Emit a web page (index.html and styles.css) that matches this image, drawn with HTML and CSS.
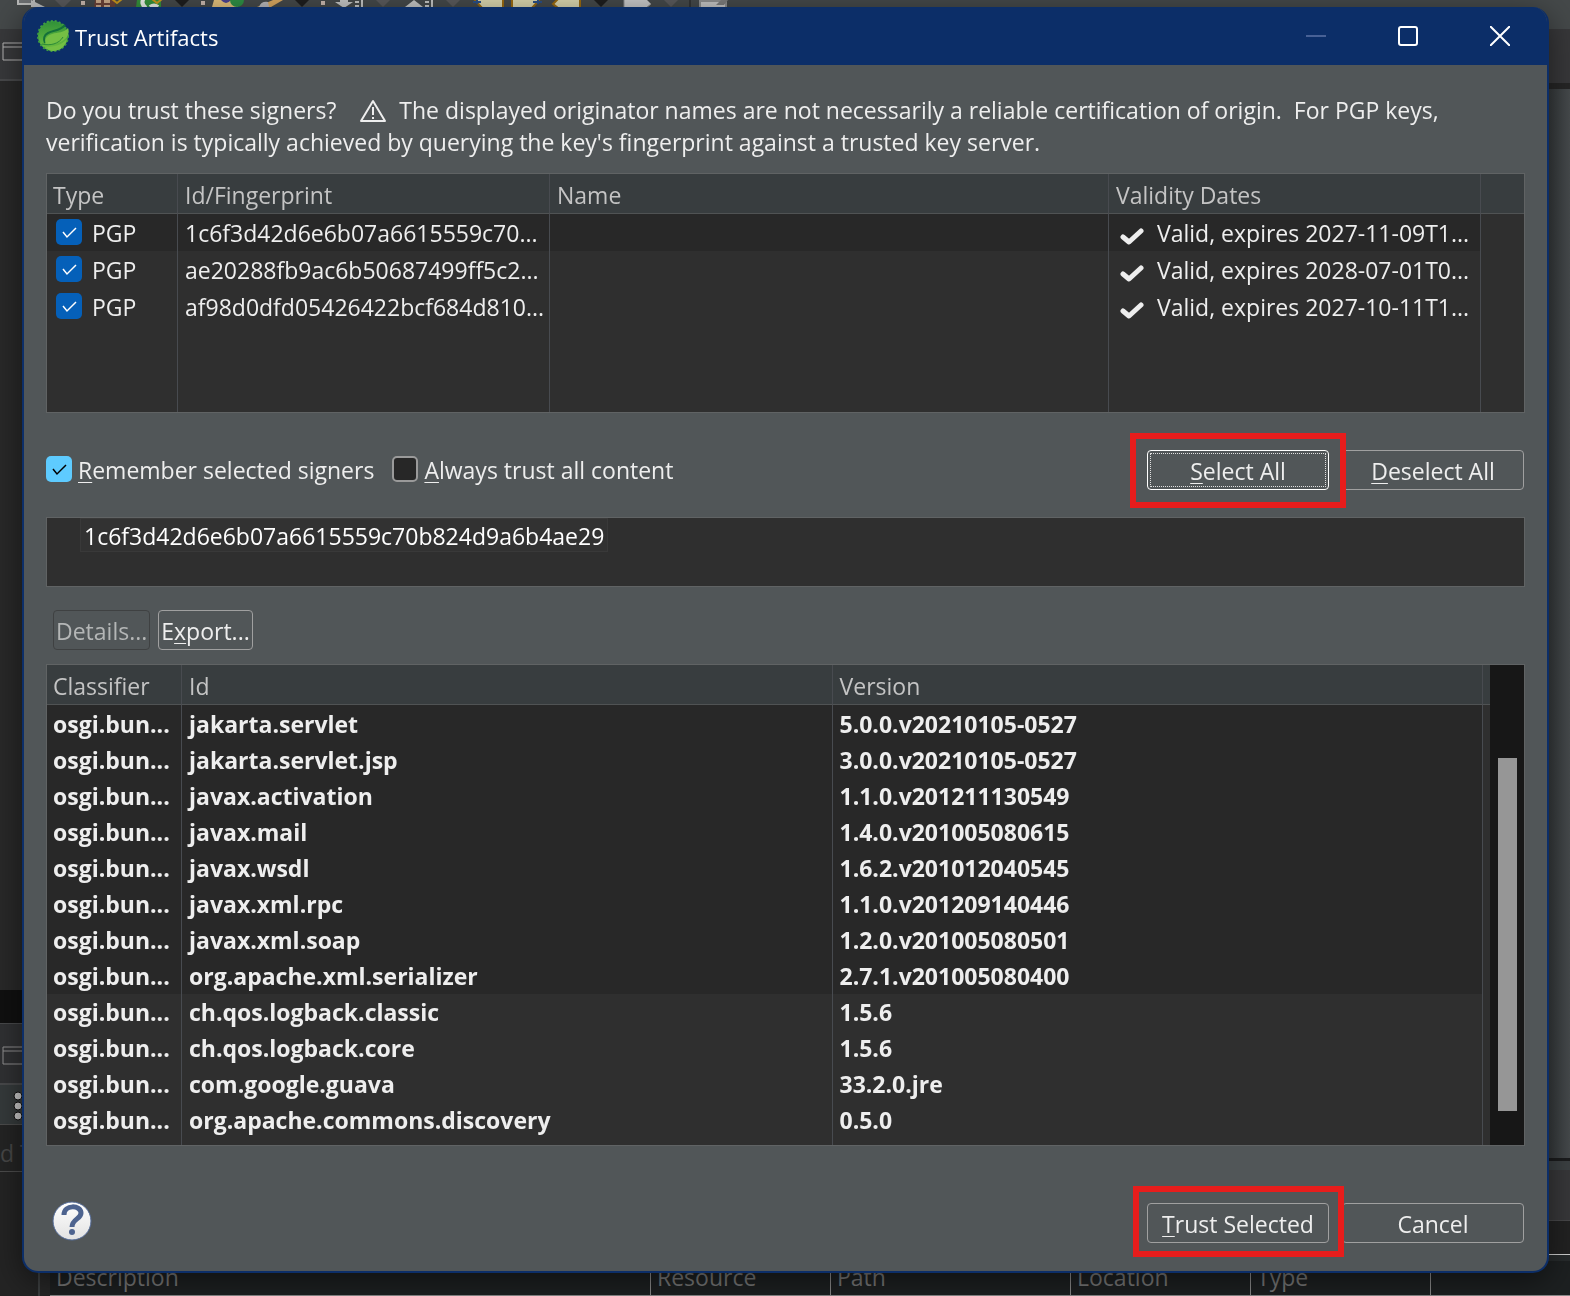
FILE: index.html
```html
<!DOCTYPE html>
<html lang="en">
<head>
    <meta charset="UTF-8">
    <meta name="viewport" content="width=device-width, initial-scale=1.0">
    <title>Trust Artifacts</title>
    <link rel="stylesheet" href="styles.css">
</head>
<body>
    <div class="ide">
        <div class="ide-toolbar">
            <svg width="760" height="10" viewBox="0 0 760 10" aria-hidden="true">
                <path d="M18 -3h16v7H18z" fill="#6d7072" stroke="#b9bab9" stroke-width="2"/>
                <path d="M31 0l14 7H31z" fill="#b9bab9"/>
                <path d="M55 0h16l-8 8z" fill="#5a5a5c"/>
                <path d="M81 1h4v4h-4z" fill="#c9b9b0"/>
                <path d="M95 0h20v7H94z" fill="#6b4238"/>
                <path d="M96 0h5v3h-5zM104 0h6v3h-6zM96 5h5v2h-5zM104 5h6v2h-6z" fill="#c9a98a"/>
                <path d="M112 -1l5 4 5-4" fill="none" stroke="#c9971c" stroke-width="2"/>
                <path d="M137 0h24v7h-25z" fill="#35923b"/>
                <path d="M144 -2q-4 6 2 10M150 7q4-3 8 0" fill="none" stroke="#e8eee6" stroke-width="4"/>
                <path d="M152 -1l5 4 5-4" fill="none" stroke="#c9971c" stroke-width="2"/>
                <path d="M175 0h14l-7 7z" fill="#1e1e1e"/>
                <path d="M201 1h4v4h-4z" fill="#c9b9b0"/>
                <path d="M214 0h24v7h-26z" fill="#e3c07c"/>
                <path d="M221 0h10q-5 6-10 0z" fill="#4b4390"/>
                <circle cx="237" cy="0" r="7" fill="#2f8f45"/>
                <path d="M257 7l16-7h10l-12 7z" fill="#d9a860"/>
                <path d="M259 7q2-6 9-5l1 5z" fill="#b8b8bc"/>
                <path d="M295 0h14l-7 7z" fill="#1e1e1e"/>
                <path d="M321 1h4v4h-4z" fill="#c9b9b0"/>
                <path d="M335 2h5V0h8v2h5l-9 6z" fill="#c4c5c4"/>
                <path d="M355 2h4M355 6h4M362 0v8" stroke="#c4c5c4" stroke-width="2"/>
                <path d="M376 0h14l-7 7z" fill="#5a5a5c"/>
                <path d="M405 7l9-7 9 7z" fill="#c4c5c4"/>
                <path d="M425 2h4M425 6h4M432 0v8" stroke="#c4c5c4" stroke-width="2"/>
                <path d="M446 0h14l-7 7z" fill="#5a5a5c"/>
                <path d="M474 -1l8 9h21V-1z" fill="#d9d5ae" stroke="#9a6a10" stroke-width="2"/>
                <path d="M473 2h8M477 0v4" stroke="#2a4f86" stroke-width="2"/>
                <path d="M512 -1v9h20l8-9z" fill="#d9d5ae" stroke="#9a6a10" stroke-width="2"/>
                <path d="M533 2h9M538 0v4" stroke="#2a4f86" stroke-width="2"/>
                <path d="M558 -1l-5 5 5 4h22V-1z" fill="#d9d5ae" stroke="#9a6a10" stroke-width="2"/>
                <path d="M594 0h14l-7 7z" fill="#1e1e1e"/>
                <path d="M624 -1v9h22l5-4-5-5z" fill="#c8c8c8" stroke="#8e8e8e"/>
                <path d="M664 0h14l-7 7z" fill="#5a5a5c"/>
                <path d="M690 0v8" stroke="#202020"/>
                <path d="M700 1h26v8h-26z" fill="#c4c4c4" stroke="#8e8e8e" stroke-width="2"/>
                <path d="M716 5l5-5h7l-4 5z" fill="#7c7c7c"/>
            </svg>
        </div>
        <div class="ide-left">
            <div class="ide-tab">
                <svg width="22" height="20" viewBox="0 0 22 20" aria-hidden="true"><path d="M2 1h24v17H2zM2 5h24" fill="none" stroke="#b4b4b4"/></svg>
            </div>
            <div class="ide-editor"></div>
            <div class="ide-gap"></div>
            <div class="ide-tab ide-tab-low">
                <svg width="22" height="20" viewBox="0 0 22 20" aria-hidden="true"><path d="M2 1h24v17H2zM2 5h24" fill="none" stroke="#8f8f90"/></svg>
            </div>
            <div class="ide-dots">
                <svg width="22" height="30" viewBox="0 0 22 30" aria-hidden="true"><g fill="#c8c8c8" stroke="#111" stroke-width="1"><circle cx="18" cy="5" r="4"/><circle cx="18" cy="15" r="4"/><circle cx="18" cy="25" r="4"/></g></svg>
            </div>
            <div class="ide-field">d T</div>
            <div class="ide-list"></div>
        </div>
        <div class="ide-right">
            <div class="ide-right-tab"></div>
            <div class="ide-right-body"></div>
            <div class="ide-right-tab ide-right-tab-low"></div>
            <div class="ide-right-dark"></div>
            <div class="ide-right-low"></div>
        </div>
        <div class="ide-columns">
            <span class="ide-col ide-col-wide">Description</span>
            <span class="ide-col">Resource</span>
            <span class="ide-col ide-col-path">Path</span>
            <span class="ide-col">Location</span>
            <span class="ide-col">Type</span>
            <span class="ide-col ide-col-rest"></span>
        </div>
    </div>

    <div class="dialog" role="dialog" aria-labelledby="dialog-title">
        <header class="titlebar">
            <svg class="logo" width="32" height="32" viewBox="0 0 32 32" aria-hidden="true">
                <defs>
                    <linearGradient id="leaf" x1="0" y1="0" x2="0" y2="1">
                        <stop offset="0" stop-color="#2f9038"/>
                        <stop offset="1" stop-color="#6fc040"/>
                    </linearGradient>
                </defs>
                <circle cx="16" cy="16" r="15" fill="url(#leaf)"/>
                <circle cx="16" cy="16" r="15" fill="none" stroke="#3d9c42" stroke-width="2" stroke-dasharray="2 2"/>
                <path d="M28 5c-5 6-11 5-17 8-4 2-5 6-3 10" fill="none" stroke="#14703a" stroke-width="2"/>
                <path d="M31 8c-4 5-10 4-16 6-6 2-8 6-6 10 8 1 16-1 21-7 2-3 2-7 1-9z" fill="#74bf44"/>
                <path d="M5 24c8 2 17 0 21-7" fill="none" stroke="#2c8a38" stroke-width="1"/>
                <path d="M9 27c8 0 16-2 21-8-1 7-7 12-14 12-3 0-5-1-7-4z" fill="#74bf44"/>
            </svg>
            <h1 id="dialog-title">Trust Artifacts</h1>
            <div class="window-buttons">
                <button type="button" aria-label="Minimize" disabled><svg width="20" height="20" viewBox="0 0 20 20"><path d="M0 10h20" stroke="#486196" stroke-width="2"/></svg></button>
                <button type="button" aria-label="Maximize"><svg width="20" height="20" viewBox="0 0 20 20"><rect x="1" y="1" width="18" height="18" rx="2" fill="none" stroke="#fff" stroke-width="2"/></svg></button>
                <button type="button" aria-label="Close"><svg width="20" height="20" viewBox="0 0 20 20"><path d="M0 0l20 20M20 0L0 20" stroke="#fff" stroke-width="2"/></svg></button>
            </div>
        </header>

        <main class="content">
            <p class="message">Do you trust these signers?&nbsp; <svg class="warning" width="26" height="24" viewBox="0 0 26 24" aria-hidden="true"><path d="M13 2L1 22h24z" fill="none" stroke="#eee" stroke-width="2" stroke-linejoin="round"/><path d="M13 8v8M13 18v2" stroke="#eee" stroke-width="2"/></svg> The displayed originator names are not necessarily a reliable certification of origin.&nbsp; For PGP keys,<br>verification is typically achieved by querying the key's fingerprint against a trusted key server.</p>

            <div class="grid signers">
                <table>
                    <colgroup><col class="c-type"><col class="c-finger"><col><col class="c-valid"><col class="c-tail"></colgroup>
                    <thead>
                        <tr><th>Type</th><th>Id/Fingerprint</th><th>Name</th><th>Validity Dates</th><th></th></tr>
                    </thead>
                    <tbody id="signer-rows"></tbody>
                </table>
            </div>

            <div class="options">
                <input type="checkbox" class="check check-light" id="remember" checked>
                <label for="remember"><u>R</u>emember selected signers</label>
                <input type="checkbox" class="check" id="always">
                <label for="always"><u>A</u>lways trust all content</label>
                <div class="actions">
                    <span class="marked"><button type="button" class="btn btn-wide btn-focus"><u>S</u>elect All</button></span>
                    <button type="button" class="btn btn-wide"><u>D</u>eselect All</button>
                </div>
            </div>

            <div class="key-tree"><span class="key">1c6f3d42d6e6b07a6615559c70b824d9a6b4ae29</span></div>

            <div class="key-actions">
                <button type="button" class="btn" disabled>Details...</button>
                <button type="button" class="btn">E<u>x</u>port...</button>
            </div>

            <div class="grid artifacts">
                <table>
                    <colgroup><col class="c-class"><col><col><col class="c-edge"></colgroup>
                    <thead>
                        <tr><th>Classifier</th><th>Id</th><th>Version</th><th></th></tr>
                    </thead>
                    <tbody id="artifact-rows"></tbody>
                </table>
                <div class="scrollbar"><div class="thumb"></div></div>
            </div>

            <footer class="footer">
                <button type="button" class="help" aria-label="Help">
                    <svg width="40" height="40" viewBox="0 0 40 40">
                        <defs>
                            <linearGradient id="ball" x1="0" y1="0" x2="0" y2="1">
                                <stop offset="0" stop-color="#fff"/>
                                <stop offset="1" stop-color="#e2e2e2"/>
                            </linearGradient>
                        </defs>
                        <circle cx="20" cy="20" r="19" fill="url(#ball)" stroke="#536a97" stroke-width="1"/>
                        <path d="M12 14c0-11 17-10 17-2 0 6-9 6-9 14" fill="none" stroke="#4d638f" stroke-width="5"/>
                        <circle cx="20" cy="31" r="3" fill="#4d638f"/>
                    </svg>
                </button>
                <div class="actions">
                    <span class="marked marked-low"><button type="button" class="btn btn-wide"><u>T</u>rust Selected</button></span>
                    <button type="button" class="btn btn-wide">Cancel</button>
                </div>
            </footer>
        </main>
    </div>

    <script src="script.js"></script>
</body>
</html>
```
FILE: styles.css
```css
:root {
    --navy: #0c2e68;
    --panel: #515658;
    --grid-bg: #2f2f2f;
    --grid-alt: #282828;
    --head-bg: #383d3f;
    --line: #606364;
    --text: #eeeeee;
    --head-text: #c4c4c4;
    --mark: #e71d1c;
}

* {
    box-sizing: border-box;
}

body {
    margin: 0;
    min-height: 100vh;
    padding: 7px 21px 24px 22px;
    overflow: hidden;
    background-color: #2a2a2a;
    color: var(--text);
    font-family: "Open Sans", "Noto Sans", sans-serif;
    font-size: 23px;
    line-height: 32px;
}

/* workbench behind the dialog */
.ide {
    position: fixed;
    inset: 0;
    overflow: hidden;
    background-color: #272727;
}

.ide-toolbar {
    height: 29px;
    background-color: #45494a;
}

.ide svg {
    display: block;
}

.ide-left,
.ide-right {
    position: absolute;
    top: 29px;
    bottom: 0;
    display: flex;
    flex-direction: column;
}

.ide-left {
    left: 0;
    width: 40px;
    background-color: #272727;
}

.ide-tab {
    height: 52px;
    padding: 13px 0 0 1px;
    background-color: #38393b;
    border-bottom: 2px solid #48494b;
}

.ide-editor {
    height: 909px;
    background: linear-gradient(to right, #292929 50%, #1b1b1b);
}

.ide-gap {
    height: 34px;
    background-color: #101010;
    border-bottom: 1px solid #48494b;
}

.ide-tab-low {
    height: 61px;
    padding-top: 22px;
    background-color: #303133;
}

.ide-dots {
    height: 39px;
    padding-top: 6px;
    background-color: #353a3b;
}

.ide-field {
    height: 48px;
    padding-top: 12px;
    border-top: 1px solid #4c4c4c;
    border-bottom: 1px solid #4c4c4c;
    background-color: #242424;
    color: #474747;
    white-space: nowrap;
    overflow: hidden;
}

.ide-list {
    flex: 1;
    border-right: 2px solid #3c3f40;
    background-color: #242424;
}

.ide-right {
    right: 0;
    width: 60px;
    background-color: #303436;
}

.ide-right-tab {
    height: 60px;
    background-color: #38383a;
    border-bottom: 6px solid #262626;
}

.ide-right-body {
    height: 1072px;
    background: linear-gradient(to right, #34383a 60%, #474b4d);
    border-bottom: 3px solid #1c1d1e;
}

.ide-right-tab-low {
    border-top: 9px solid #3c4143;
    border-bottom: 1px solid #48484a;
}

.ide-right-dark {
    height: 34px;
    background-color: #222222;
    border-bottom: 1px solid #d0d0d0;
}

.ide-right-low {
    flex: 1;
    background-color: #272b2c;
}

.ide-columns {
    position: absolute;
    left: 50px;
    right: 0;
    bottom: 0;
    display: flex;
    height: 35px;
    border-bottom: 1px solid #8a8a8a;
    background: #1d2021;
    color: #777777;
}

.ide-col {
    width: 180px;
    padding-left: 6px;
    border-right: 1px solid #8a8a8a;
}

.ide-col-wide {
    width: 601px;
}

.ide-col-path {
    width: 240px;
}

.ide-col-rest {
    flex: 1;
    border: 0;
}

/* dialog window */
.dialog {
    position: relative;
    overflow: hidden;
    border: 2px solid var(--navy);
    border-top: 0;
    border-radius: 16px;
    background-color: var(--panel);
    box-shadow: 0 8px 32px rgba(0, 0, 0, 0.5);
}

.titlebar {
    display: flex;
    align-items: center;
    height: 58px;
    padding-left: 13px;
    background-color: var(--navy);
}

h1 {
    margin: 2px 0 0 6px;
    color: #ffffff;
    font-size: 22px;
    font-weight: 400;
}

.window-buttons {
    display: flex;
    margin-left: auto;
}

.window-buttons button {
    width: 92px;
    height: 58px;
    padding: 2px 2px 0 0;
    border: 0;
    background: none;
}

.content {
    padding: 29px 22px 26px;
}

.message {
    margin: 0 0 15px;
    white-space: nowrap;
}

.warning {
    margin: 0 7px 0 12px;
    vertical-align: -4px;
}

.grid {
    display: flex;
    overflow: hidden;
    border: 1px solid var(--line);
    background-color: var(--grid-bg);
}

table {
    flex: 1;
    width: 100%;
    border-collapse: separate;
    border-spacing: 0;
    table-layout: fixed;
}

th,
td {
    overflow: hidden;
    padding: 0 0 0 7px;
    border-right: 1px solid #484b50;
    text-align: left;
    white-space: nowrap;
    text-overflow: ellipsis;
}

th {
    height: 40px;
    padding-top: 2px;
    border-bottom: 1px solid #505354;
    background-color: var(--head-bg);
    color: var(--head-text);
    font-weight: 400;
}

th:first-child,
td:first-child {
    padding-left: 6px;
}

th:last-child,
td:last-child {
    border-right: 0;
}

.signers {
    height: 240px;
}

.signers td {
    height: 37px;
}

.signers tbody tr:first-child td:not(:last-child),
.artifacts .alt td:not(:last-child) {
    background-color: var(--grid-alt);
}

.signers .filler td {
    height: 87px;
}

.c-type {
    width: 131px;
}

.c-finger {
    width: 372px;
}

.c-valid {
    width: 372px;
}

.c-tail {
    width: 43px;
}

.cell {
    display: flex;
    align-items: center;
}

.cell .check {
    margin: 0 10px 2px 3px;
}

.cell svg {
    flex: none;
    margin: 6px 13px 0 4px;
}

.check {
    flex: none;
    appearance: none;
    width: 26px;
    height: 26px;
    margin: 0;
    border: 2px solid #9a9a9a;
    border-radius: 5px;
    background-color: #272727;
}

.check:checked {
    border: 0;
    background: #0560b9 url("data:image/svg+xml,%3Csvg xmlns='http://www.w3.org/2000/svg' viewBox='0 0 26 26'%3E%3Cpath d='M7 13l4 5 9-9' fill='none' stroke='white' stroke-width='1.5'/%3E%3C/svg%3E");
}

.check-light:checked {
    background: #5ecbff url("data:image/svg+xml,%3Csvg xmlns='http://www.w3.org/2000/svg' viewBox='0 0 26 26'%3E%3Cpath d='M7 13l4 5 9-9' fill='none' stroke='black' stroke-width='1.5'/%3E%3C/svg%3E");
}

.options {
    display: flex;
    align-items: center;
    height: 74px;
    margin-top: 20px;
}

.options .check {
    margin-bottom: 2px;
}

.options label {
    margin: 0 18px 0 6px;
}

u {
    text-decoration-thickness: 1px;
    text-underline-offset: 3px;
}

.actions {
    display: flex;
    align-items: center;
    margin: 0 1px 0 auto;
}

/* highlight frame drawn over the button row */
.marked {
    position: relative;
    margin-right: 13px;
}

.marked::after {
    content: "";
    position: absolute;
    inset: -17px -17px -18px;
    border: 6px solid var(--mark);
    pointer-events: none;
}

.marked-low::after {
    inset: -17px -15px -14px -14px;
}

.btn {
    display: block;
    height: 40px;
    padding: 2px 2px 0;
    border: 1px solid #a0a0a0;
    border-radius: 4px;
    background: none;
    color: var(--text);
    font: inherit;
    line-height: 34px;
}

.btn:disabled {
    border-color: #3f4142;
    color: #b4b6b6;
}

.btn-wide {
    width: 182px;
}

.btn-focus {
    border-color: #ffffff;
    outline: 1px dotted #e0e0e0;
    outline-offset: -4px;
}

.key-tree {
    height: 70px;
    margin-top: 10px;
    padding-left: 33px;
    border: 1px solid var(--line);
    background-color: var(--grid-bg);
}

.key {
    display: inline-block;
    height: 34px;
    padding: 1px 3px 0;
    border: 1px solid #393939;
    background-color: #323232;
    color: #ffffff;
}

.key-actions {
    display: flex;
    gap: 8px;
    margin: 23px 0 14px 7px;
}

.artifacts td {
    height: 36px;
    font-weight: 700;
}

.c-class {
    width: 135px;
}

.c-edge {
    width: 7px;
}

.artifacts tbody tr:first-child td {
    height: 37px;
}

.artifacts .filler td {
    height: 7px;
}

.scrollbar {
    width: 34px;
    padding: 93px 7px 34px 8px;
    background-color: #171717;
}

.thumb {
    height: 100%;
    background-color: #969696;
}

.footer {
    display: flex;
    align-items: center;
    margin-top: 55px;
}

.help {
    margin: 0 0 4px 6px;
    padding: 0;
    border: 0;
    background: none;
}

.help svg {
    display: block;
}
```
FILE: script.js
```js
const signers = [
    ['1c6f3d42d6e6b07a6615559c70...', 'Valid, expires 2027-11-09T1...'],
    ['ae20288fb9ac6b50687499ff5c2...', 'Valid, expires 2028-07-01T0...'],
    ['af98d0dfd05426422bcf684d810...', 'Valid, expires 2027-10-11T1...']
];

const artifacts = [
    ['jakarta.servlet', '5.0.0.v20210105-0527'],
    ['jakarta.servlet.jsp', '3.0.0.v20210105-0527'],
    ['javax.activation', '1.1.0.v201211130549'],
    ['javax.mail', '1.4.0.v201005080615'],
    ['javax.wsdl', '1.6.2.v201012040545'],
    ['javax.xml.rpc', '1.1.0.v201209140446'],
    ['javax.xml.soap', '1.2.0.v201005080501'],
    ['org.apache.xml.serializer', '2.7.1.v201005080400'],
    ['ch.qos.logback.classic', '1.5.6'],
    ['ch.qos.logback.core', '1.5.6'],
    ['com.google.guava', '33.2.0.jre'],
    ['org.apache.commons.discovery', '0.5.0']
];

const tick = '<svg width="24" height="20" viewBox="0 0 24 20" aria-hidden="true"><path d="M3 11l6 5L21 5" fill="none" stroke="#eee" stroke-width="5" stroke-linejoin="round" stroke-linecap="round"/></svg>';

document.getElementById('signer-rows').innerHTML = signers.map(([id, valid]) => `
    <tr>
        <td><label class="cell"><input type="checkbox" class="check" checked>PGP</label></td>
        <td>${id}</td>
        <td></td>
        <td><div class="cell">${tick}${valid}</div></td>
        <td></td>
    </tr>`).join('') + '<tr class="filler"><td></td><td></td><td></td><td></td><td></td></tr>';

// the first eight artifacts form the shaded group
document.getElementById('artifact-rows').innerHTML = artifacts.map(([id, version], i) => `
    <tr class="${i < 8 ? 'alt' : ''}">
        <td>osgi.bun...</td>
        <td>${id}</td>
        <td>${version}</td>
        <td></td>
    </tr>`).join('') + '<tr class="filler"><td></td><td></td><td></td><td></td></tr>';
```
